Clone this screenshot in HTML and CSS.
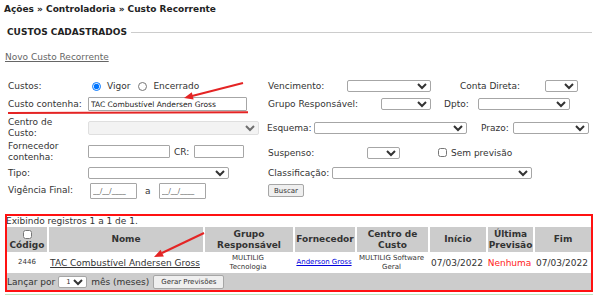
FILE: index.html
```html
<!DOCTYPE html>
<html lang="pt-BR">
<head>
    <meta charset="UTF-8">
    <meta name="viewport" content="width=device-width, initial-scale=1.0">
    <title>Custo Recorrente</title>
    <link rel="stylesheet" href="styles.css">
</head>
<body>
    <div class="breadcrumb">Ações » Controladoria » Custo Recorrente</div>
    <h2 class="section-title">CUSTOS CADASTRADOS</h2>
    <a class="new-link" href="#">Novo Custo Recorrente</a>

    <!-- Filtros -->
    <form class="filters">
        <div class="row r1">
            <span class="lbl">Custos:</span>
            <div class="fields">
                <label class="opt"><input type="radio" name="status" checked>Vigor</label>
                <label class="opt"><input type="radio" name="status">Encerrado</label>
            </div>
            <div class="side">
                <span class="slbl w-venc">Vencimento:</span>
                <select class="sel w84"><option></option></select>
                <span class="slbl w-conta">Conta Direta:</span>
                <select class="sel w33"><option></option></select>
            </div>
        </div>

        <div class="row r2">
            <span class="lbl">Custo contenha:</span>
            <div class="fields">
                <input class="txt w159" type="text" value="TAC Combustível Andersen Gross">
            </div>
            <div class="side">
                <span class="slbl w-grupo">Grupo Responsável:</span>
                <select class="sel w50"><option></option></select>
                <span class="slbl w-dpto">Dpto:</span>
                <select class="sel w92"><option></option></select>
            </div>
        </div>

        <div class="row r3">
            <span class="lbl">Centro de<br>Custo:</span>
            <div class="fields">
                <select class="sel w171 tall" disabled><option></option></select>
            </div>
            <div class="side">
                <span class="slbl w-esq">Esquema:</span>
                <select class="sel w153"><option></option></select>
                <span class="slbl w-prazo">Prazo:</span>
                <select class="sel w76"><option></option></select>
            </div>
        </div>

        <div class="row r4">
            <span class="lbl">Fornecedor<br>contenha:</span>
            <div class="fields">
                <input class="txt w82" type="text">
                <span class="cr">CR:</span>
                <input class="txt w50" type="text">
            </div>
            <div class="side low">
                <span class="slbl w-susp">Suspenso:</span>
                <select class="sel w33"><option></option></select>
                <label class="check"><input type="checkbox">Sem previsão</label>
            </div>
        </div>

        <div class="row r5">
            <span class="lbl">Tipo:</span>
            <div class="fields">
                <select class="sel w141"><option></option></select>
            </div>
            <div class="side">
                <span class="slbl w-class">Classificação:</span>
                <select class="sel w200"><option></option></select>
            </div>
        </div>

        <div class="row r6">
            <span class="lbl">Vigência Final:</span>
            <div class="fields">
                <input class="txt date" type="text" value="__/__/____">
                <span class="ate">a</span>
                <input class="txt date" type="text" value="__/__/____">
            </div>
            <div class="side">
                <button class="btn" type="button">Buscar</button>
            </div>
        </div>
    </form>

    <!-- Resultados -->
    <div class="results">
        <div class="count">Exibindo registros 1 a 1 de 1.</div>
        <table class="grid">
            <thead>
                <tr>
                    <th class="c-cod"><input type="checkbox">Código</th>
                    <th class="c-nome">Nome</th>
                    <th class="c-grupo">Grupo<br>Responsável</th>
                    <th class="c-forn">Fornecedor</th>
                    <th class="c-centro">Centro de<br>Custo</th>
                    <th class="c-ini">Início</th>
                    <th class="c-ult">Última<br>Previsão</th>
                    <th class="c-fim">Fim</th>
                </tr>
            </thead>
            <tbody>
                <tr class="data">
                    <td class="small">2446</td>
                    <td><a class="name-link" href="#">TAC Combustível Andersen Gross</a></td>
                    <td class="small">MULTILIG<br>Tecnologia</td>
                    <td class="small"><a class="forn-link" href="#">Anderson Gross</a></td>
                    <td class="small">MULTILIG Software<br>Geral</td>
                    <td>07/03/2022</td>
                    <td class="none">Nenhuma</td>
                    <td>07/03/2022</td>
                </tr>
                <tr class="foot">
                    <td colspan="8">
                        <div class="foot-line">
                            Lançar por
                            <select class="sel month"><option>1</option></select>
                            mês (meses)
                            <button class="btn gen" type="button">Gerar Previsões</button>
                        </div>
                    </td>
                </tr>
            </tbody>
        </table>
    </div>
    <div class="next-bar"></div>

    <!-- Marcações em vermelho -->
    <svg class="marks" width="600" height="297" viewBox="0 0 600 297">
        <line x1="8" y1="113" x2="248" y2="112.2" stroke="#e42424" stroke-width="2"/>
        <line x1="243" y1="83" x2="192" y2="96" stroke="#e42424" stroke-width="2"/>
        <polygon points="184,98 193.6,99.4 191.8,92.2" fill="#e42424"/>
        <line x1="204" y1="233" x2="162" y2="253" stroke="#e42424" stroke-width="2"/>
        <polygon points="154,257 163.9,256.6 160.6,249.8" fill="#e42424"/>
    </svg>
</body>
</html>
```

FILE: styles.css
```css
body {
    margin: 0;
    font-family: Verdana, "DejaVu Sans", sans-serif;
    font-size: 9px;
    color: #333;
    background: #fff;
    position: relative;
}
.breadcrumb {
    margin: 3px 0 0 4px;
    line-height: 12px;
    font-weight: bold;
    color: #222;
}
.section-title {
    display: flex;
    align-items: center;
    margin: 11px 8px 0 7px;
    font-size: 9px;
    line-height: 12px;
    color: #222;
}
.section-title::after {
    content: "";
    flex: 1;
    height: 1px;
    margin-left: 4px;
    background: #ccc;
}
.new-link {
    display: inline-block;
    margin: 13px 0 0 5px;
    line-height: 12px;
    color: #666;
}

/* filtros */
.filters { margin: 16px 0 0 8px; }
.row { display: flex; align-items: center; }
.r1 { height: 14px; }
.r2 { height: 16px; margin-top: 3px; }
.r3 { height: 24px; margin-top: 4px; }
.r4 { height: 23px; }
.r5 { height: 18px; margin-top: 1px; }
.r6 { height: 17px; }
.lbl { width: 80px; flex: none; line-height: 11px; }
.fields { width: 180px; flex: none; display: flex; align-items: center; }
.side { display: flex; align-items: center; }
.side.low { padding-top: 3px; }
.slbl { flex: none; }
.w-venc { width: 79px; }
.w-conta { width: 85px; margin-left: 29px; }
.w-grupo { width: 113px; }
.w-dpto { width: 34px; margin-left: 13px; }
.w-esq { width: 47px; margin-left: -1px; }
.w-prazo { width: 32px; margin-left: 14px; }
.w-susp { width: 99px; }
.w-class { width: 64px; }

.opt { display: flex; align-items: center; }
.opt input {
    width: 9px;
    height: 9px;
    margin: 0 6px 0 4px;
}
.opt + .opt input { margin-left: 8px; }

.sel {
    height: 12px;
    padding: 0 2px;
    font-family: inherit;
    font-size: 7px;
    color: #333;
    border: 1px solid #a6a6a6;
    border-radius: 2px;
    background: #fff;
    box-sizing: border-box;
}
.sel.tall { height: 14px; }
.sel:disabled { background: #efefef; border-color: #d2d2d2; }
.w33 { width: 33px; }
.w50 { width: 50px; }
.w76 { width: 76px; }
.w84 { width: 84px; }
.w92 { width: 92px; }
.w141 { width: 141px; }
.w153 { width: 153px; }
.w171 { width: 171px; }
.w200 { width: 200px; }

.txt {
    height: 14px;
    padding: 0 2px;
    font-family: inherit;
    font-size: 7.5px;
    color: #222;
    border: 1px solid #a6a6a6;
    border-radius: 1px;
    box-sizing: border-box;
}
.w159 { width: 159px; }
.w82 { width: 82px; height: 13px; }
.w50.txt { width: 50px; height: 13px; }
.cr { width: 20px; margin-left: 4px; }
.date {
    width: 47px;
    height: 16px;
    margin-left: 2px;
    font-size: 7px;
    color: #555;
}
.ate { margin: 0 6px 0 8px; }
.check { display: flex; align-items: center; margin-left: 38px; }
.check input { width: 9px; height: 9px; margin: 0 4px 2px 0; }

.btn {
    height: 13px;
    padding: 0 5px;
    font-family: inherit;
    font-size: 7px;
    color: #333;
    background: #efefef;
    border: 1px solid #a6a6a6;
    border-radius: 2px;
}

/* resultados */
.results {
    margin: 17px 9px 0 7px;
    outline: 2px solid #f11;
}
.count { line-height: 10px; margin-left: -1px; }
.grid {
    width: 100%;
    margin-top: 1px;
    border-collapse: separate;
    border-spacing: 0;
    table-layout: fixed;
}
.grid th {
    height: 25px;
    padding: 1px 0;
    box-sizing: border-box;
    background: #ccc;
    color: #333;
    font-weight: bold;
    line-height: 11px;
    text-align: center;
}
.grid th + th { border-left: 2px solid #fff; }
.c-cod { width: 40px; }
.c-nome { width: 156px; }
.c-grupo { width: 90px; }
.c-forn { width: 62px; }
.c-centro { width: 73px; }
.c-ini { width: 58px; }
.c-ult { width: 47px; }
.c-fim { width: 58px; }
.c-cod input {
    width: 9px;
    height: 9px;
    margin: 2px auto 1px;
    display: block;
}
.grid td {
    padding: 0;
    text-align: center;
    white-space: nowrap;
}
.data td { height: 21px; }
.grid td.small { font-size: 7px; line-height: 9px; }
.name-link { color: #333; }
.forn-link { color: #00d; }
.none { color: #f22; }
.foot td {
    height: 17px;
    background: #ccc;
    text-align: left;
}
.foot-line { display: flex; align-items: center; }
.sel.month {
    width: 29px;
    margin: 0 4px 0 3px;
    padding: 0 0 0 3px;
    line-height: 10px;
}
.btn.gen { margin-left: 4px; height: 14px; padding: 0 7px; }
.next-bar {
    margin: 4px 7px 0 5px;
    border-top: 1px solid #bfe6bf;
}

.marks {
    position: absolute;
    left: 0;
    top: 0;
    pointer-events: none;
}
```
